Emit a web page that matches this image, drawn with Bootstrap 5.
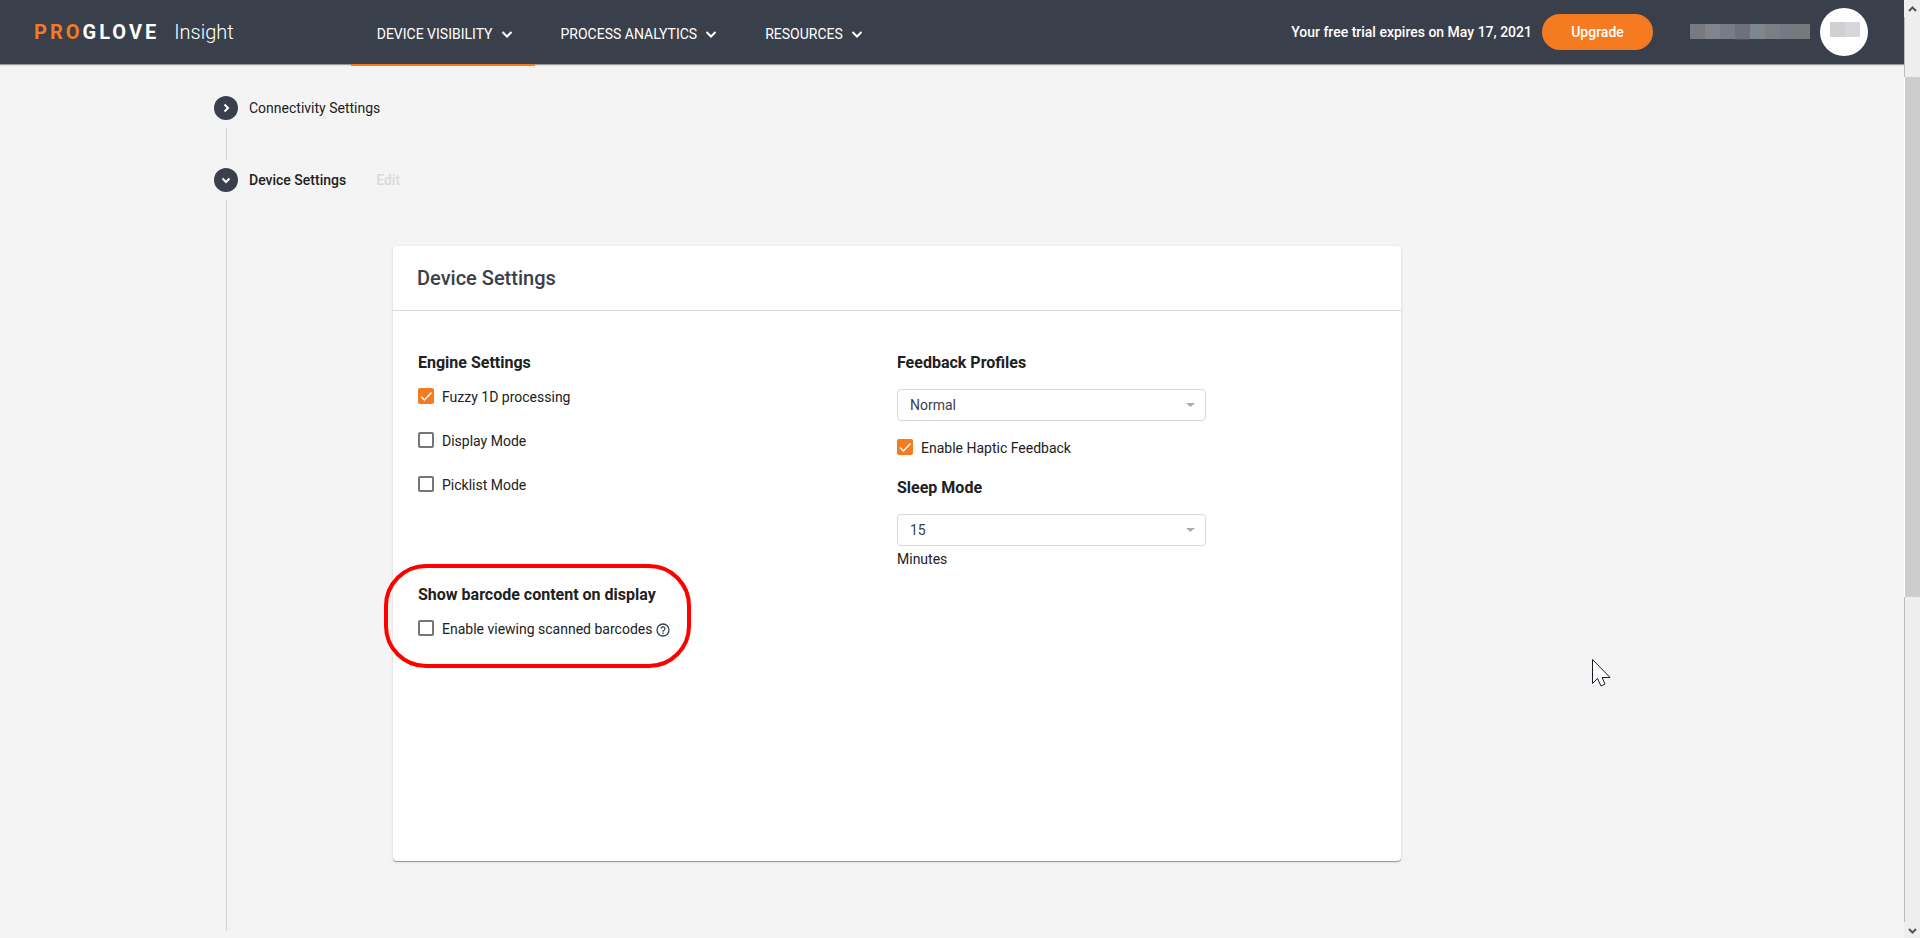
<!DOCTYPE html>
<html lang="en">
<head>
<meta charset="utf-8">
<meta name="viewport" content="width=device-width, initial-scale=1">
<title>ProGlove Insight - Device Settings</title>
<link href="https://cdn.jsdelivr.net/npm/bootstrap@5.3.0/dist/css/bootstrap.min.css" rel="stylesheet">
<style>
:root { --slate: #3a404b; --orange: #f67a20; --rule: #d8d8d8; }
body { font-family: Roboto, "Liberation Sans", sans-serif; font-size: 14px; line-height: 20px; color: #212121; background: #f4f4f4; }
.topbar { height: 64px; background: var(--slate); box-shadow: 0 1px 0 #959799, 0 2px 1px rgba(0,0,0,.06); padding: 0 36px 0 34px; color: #fff; }
.logo { font-size: 20px; line-height: 24px; color: #fff; text-decoration: none; }
.logo b { letter-spacing: 3px; }
.logo b span { color: var(--orange); }
.logo .product { font-weight: 300; margin-left: 15px; }
.menus { margin-left: 117px; }
.menu-btn { position: relative; height: 64px; padding: 4px 16px 0 26px; border: 0; background: none; color: #fff; white-space: nowrap; display: flex; align-items: center; gap: 2px; }
.menu-btn.active::after { content: ""; position: absolute; left: 0; right: 0; bottom: -2px; height: 2px; background: var(--orange); }
.trial, .current { font-weight: 500; }
.btn-upgrade { width: 111px; height: 36px; padding: 0; border: 0; border-radius: 18px; background: var(--orange); color: #fff; font-size: 14px; font-weight: 500; margin-left: 10px; }
.masked { margin: -2px 10px 0 37px; }
.avatar { width: 48px; height: 48px; background: #fff; }
.steps { max-width: 1476px; padding-top: 32px; }
.step-toggle { width: 24px; height: 24px; border: 0; padding: 0; background: var(--slate); color: #fff; }
.step-name { margin-left: 11px; }
.edit-link { margin-left: 30px; color: #d9dadc; font-weight: 500; text-decoration: none; }
.rail { margin: 8px 0 8px 12px; border-left: 1px solid #d2d2d2; }
.rail-short { height: 32px; }
.rail-long { padding: 46px 0 70px 166px; margin-bottom: 7px; }
.panel { max-width: 1008px; min-height: 615px; background: #fff; border-radius: 4px; box-shadow: 0 1px 0 #9c9c9c, 0 1px 3px rgba(0,0,0,.16); }
.panel-head { padding: 20px 24px; border-bottom: 1px solid var(--rule); }
.panel-head h1 { font-size: 20px; line-height: 24px; font-weight: 500; color: var(--slate); margin: 0; }
.panel-body { padding: 40px 25px; }
h2 { font-size: 16px; line-height: 24px; font-weight: 700; margin: 0 0 12px; }
.tick { display: flex; gap: 8px; }
.tick .form-check-input { flex: none; float: none; width: 16px; height: 16px; margin: 1px 0 0; border: 2px solid #757575; border-radius: 2px; background-color: #fff; }
.tick .form-check-input:checked { border-color: var(--orange); background-color: var(--orange); background-origin: border-box; background-size: 16px 16px; background-image: url("data:image/svg+xml,%3Csvg xmlns='http://www.w3.org/2000/svg' viewBox='0 0 16 16'%3E%3Cpath d='M3 8.5l3.400 3.400L13.500 4.600' fill='none' stroke='white' stroke-width='1.4'/%3E%3C/svg%3E"); }
.engine { gap: 24px; margin-bottom: 88px; }
.ringed { position: relative; width: fit-content; }
.ringed::after { content: ""; position: absolute; inset: -19px -21px -29px -34px; border: 4px solid #f00; border-radius: 42px; pointer-events: none; }
.picker { width: 309px; height: 32px; padding: 0 32px 0 12px; border: 1px solid var(--rule); border-radius: 4px; font-size: 14px; line-height: 30px; color: var(--slate); background-color: #fff; background-size: 9px 4px; background-position: right 10px center; background-image: url("data:image/svg+xml,%3Csvg xmlns='http://www.w3.org/2000/svg' viewBox='0 0 9 4'%3E%3Cpath d='M0 0h9L4.5 4z' fill='%23a9acb1'/%3E%3C/svg%3E"); }
.fields { gap: 14px; }
.fields h2 { margin-bottom: 0; }
.fields .tick { padding: 3px 0 4px; }
.unit { display: block; margin-top: 3px; }
.pointer { position: absolute; left: 82.900%; top: 659px; pointer-events: none; }
.scroller { flex: none; width: 16px; background: #eee; }
.scroller svg { flex: none; }
.track { border-left: 1px solid #bbb; }
.thumb { border-left: 1px solid #fff; background: #cdcdcd; }
</style>
</head>
<body>
<div class="d-flex min-vh-100 position-relative">
  <div class="flex-grow-1">
    <header class="topbar d-flex align-items-center">
      <a class="logo text-nowrap" href="#"><b><span>PRO</span>GLOVE</b><span class="product">Insight</span></a>
      <nav class="menus d-flex">
        <button class="menu-btn active" type="button">DEVICE VISIBILITY<svg width="24" height="24" fill="none" stroke="currentColor" stroke-width="2"><path d="M7.500 10l4.500 4.500L16.500 10"/></svg></button>
        <button class="menu-btn" type="button">PROCESS ANALYTICS<svg width="24" height="24" fill="none" stroke="currentColor" stroke-width="2"><path d="M7.500 10l4.500 4.500L16.500 10"/></svg></button>
        <button class="menu-btn" type="button">RESOURCES<svg width="24" height="24" fill="none" stroke="currentColor" stroke-width="2"><path d="M7.500 10l4.500 4.500L16.500 10"/></svg></button>
      </nav>
      <div class="d-flex align-items-center ms-auto text-nowrap">
        <span class="trial">Your free trial expires on May 17, 2021</span>
        <button class="btn-upgrade" type="button">Upgrade</button>
        <svg class="masked" width="120" height="17" shape-rendering="crispEdges" aria-hidden="true">
          <path fill="#777a81" d="M0 1h15v15H0z"/><path fill="#82848b" d="M15 1h15v15H15z"/><path fill="#767d88" d="M30 1h15v15H30z"/><path fill="#707178" d="M45 1h15v15H45z"/><path fill="#4a505a" d="M45 16h15v1H45z"/><path fill="#7c8790" d="M60 1h15v15H60z"/><path fill="#7b7e82" d="M75 1h15v15H75z"/><path fill="#747983" d="M90 1h15v15H90z"/><path fill="#76797d" d="M105 1h15v15h-15z"/>
        </svg>
        <span class="avatar rounded-circle"><svg class="d-block" width="48" height="48" shape-rendering="crispEdges" aria-hidden="true"><path fill="#d0d0d0" d="M10 14h15v15H10z"/><path fill="#d4d8dc" d="M25 14h15v15H25z"/></svg></span>
      </div>
    </header>

    <main class="steps mx-auto">
      <div class="d-flex align-items-center">
        <button class="step-toggle rounded-circle" type="button" aria-label="Expand connectivity settings"><svg class="d-block" width="24" height="24" fill="none" stroke="currentColor" stroke-width="2"><path d="M10.500 8.500L14 12l-3.500 3.500"/></svg></button>
        <span class="step-name">Connectivity Settings</span>
      </div>
      <div class="rail rail-short"></div>
      <div class="d-flex align-items-center">
        <button class="step-toggle rounded-circle" type="button" aria-label="Collapse device settings"><svg class="d-block" width="24" height="24" fill="none" stroke="currentColor" stroke-width="2"><path d="M8.500 10.500L12 14l3.500-3.500"/></svg></button>
        <span class="step-name current">Device Settings</span>
        <a class="edit-link" href="#">Edit</a>
      </div>
      <div class="rail rail-long">
        <section class="panel">
          <div class="panel-head"><h1>Device Settings</h1></div>
          <div class="panel-body">
            <div class="row gx-0">
              <div class="col-6">
                <h2>Engine Settings</h2>
                <div class="engine d-flex flex-column">
                  <div class="tick"><input class="form-check-input" type="checkbox" id="fuzzy" checked><label for="fuzzy">Fuzzy 1D processing</label></div>
                  <div class="tick"><input class="form-check-input" type="checkbox" id="display"><label for="display">Display Mode</label></div>
                  <div class="tick"><input class="form-check-input" type="checkbox" id="picklist"><label for="picklist">Picklist Mode</label></div>
                </div>
                <div class="ringed">
                  <h2>Show barcode content on display</h2>
                  <div class="tick">
                    <input class="form-check-input" type="checkbox" id="scanned"><label for="scanned">Enable viewing scanned barcodes <svg class="align-text-bottom" width="14" height="14" viewBox="0 0 14 14" fill="none" stroke="#3a404b" stroke-width="1.3"><circle cx="7" cy="7" r="6"/><path d="M5.100 5.700a1.900 1.900 0 1 1 2.900 1.600c-.7.400-1 .7-1 1.400M7 9.600v1.400"/></svg></label>
                  </div>
                </div>
              </div>
              <div class="col-6">
                <div class="fields d-flex flex-column">
                  <h2><label for="profile">Feedback Profiles</label></h2>
                  <select class="form-select picker" id="profile"><option>Normal</option></select>
                  <div class="tick"><input class="form-check-input" type="checkbox" id="haptic" checked><label for="haptic">Enable Haptic Feedback</label></div>
                  <h2><label for="sleep">Sleep Mode</label></h2>
                  <div>
                    <select class="form-select picker" id="sleep"><option>15</option></select>
                    <span class="unit">Minutes</span>
                  </div>
                </div>
              </div>
            </div>
          </div>
        </section>
      </div>
    </main>
  </div>

  <div class="scroller d-flex flex-column" aria-hidden="true">
    <svg width="16" height="17" fill="none" stroke="#555" stroke-width="2"><path d="M5 11l3.500-3.500L12 11"/></svg>
    <div class="track" style="flex:60"></div>
    <div class="thumb" style="flex:520"></div>
    <div class="track" style="flex:325"></div>
    <svg width="16" height="16" fill="none" stroke="#555" stroke-width="2"><path d="M5 7l3.500 3.500L12 7"/></svg>
  </div>

  <svg class="pointer" width="20" height="29" aria-hidden="true"><path d="M.5.500v24l5-5 3.500 7.500 4-2-3-6.500h8z" fill="#fff" stroke="#1d1a2b"/></svg>
</div>
<script src="https://cdn.jsdelivr.net/npm/bootstrap@5.3.0/dist/js/bootstrap.bundle.min.js"></script>
</body>
</html>
